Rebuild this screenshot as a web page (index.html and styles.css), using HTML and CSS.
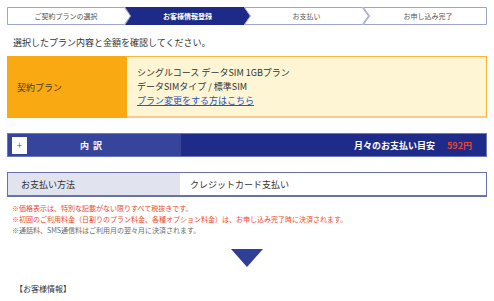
FILE: index.html
```html
<!DOCTYPE html>
<html lang="ja">
<head>
<meta charset="utf-8">
<link rel="stylesheet" href="styles.css">
</head>
<body>
<div class="page">
  <div class="steps">
    <div class="step s1">
      <svg class="shape" width="124" height="18" viewBox="0 0 124 18"><polygon points="0.5,0.5 117.5,0.5 123.5,9 117.5,17.5 0.5,17.5" fill="#fff" stroke="#9ea3cf" stroke-width="1"/></svg>
      <span class="label">ご契約プランの選択</span>
    </div>
    <div class="step s2 active">
      <svg class="shape" width="125" height="18" viewBox="0 0 125 18"><polygon points="0,0 119,0 125,9 119,18 0,18 6,9" fill="#1d2a87"/></svg>
      <span class="label">お客様情報登録</span>
    </div>
    <div class="step s3">
      <svg class="shape" width="125" height="18" viewBox="0 0 125 18"><polygon points="0.5,0.5 118.5,0.5 124.5,9 118.5,17.5 0.5,17.5 6.5,9" fill="#fff" stroke="#9ea3cf" stroke-width="1"/></svg>
      <span class="label">お支払い</span>
    </div>
    <div class="step s4">
      <svg class="shape" width="124" height="18" viewBox="0 0 124 18"><polygon points="0.5,0.5 123.5,0.5 123.5,17.5 0.5,17.5 6.5,9" fill="#fff" stroke="#9ea3cf" stroke-width="1"/></svg>
      <span class="label">お申し込み完了</span>
    </div>
  </div>

  <p class="lead">選択したプラン内容と金額を確認してください。</p>

  <div class="plan">
    <div class="plan-head">契約プラン</div>
    <div class="plan-body">
      <div>シングルコース データSIM 1GBプラン</div>
      <div>データSIMタイプ / 標準SIM</div>
      <div><a class="link" href="#">プラン変更をする方はこちら</a></div>
    </div>
  </div>

  <div class="breakdown">
    <div class="bd-left">
      <span class="plus">+</span>
      <span class="bd-title">内&nbsp;&nbsp;訳</span>
    </div>
    <div class="bd-right">
      <span class="bd-label">月々のお支払い目安</span>
      <span class="bd-price">592円</span>
    </div>
  </div>

  <div class="pay">
    <div class="pay-head">お支払い方法</div>
    <div class="pay-body">クレジットカード支払い</div>
  </div>

  <div class="notes">
    <p class="note red">※価格表示は、特別な記載がない限りすべて税抜きです。</p>
    <p class="note red">※初回のご利用料金（日割りのプラン料金、各種オプション料金）は、お申し込み完了時に決済されます。</p>
    <p class="note gray">※通話料、SMS通信料はご利用月の翌々月に決済されます。</p>
  </div>

  <div class="arrow"></div>

  <p class="section">【お客様情報】</p>
</div>
</body>
</html>
```
FILE: styles.css
```css
* { box-sizing: border-box; }
html, body { margin: 0; padding: 0; background: #fff; }
body {
  font-family: "Noto Sans CJK JP", "Noto Sans", sans-serif;
  color: #333;
}
.page { padding: 7px 7px 0 7px; width: 494px; }

.steps { display: flex; height: 18px; width: 480px; }
.step { position: relative; height: 18px; display: flex; align-items: center; justify-content: center; }
.step .shape { position: absolute; left: 0; top: 0; overflow: visible; }
.step .label { position: relative; font-size: 7px; line-height: 18px; color: #555; }
.s1 { width: 118px; }
.s2 { width: 119px; }
.s3 { width: 119px; }
.s4 { flex: 1; }
.s2 .label, .s3 .label, .s4 .label { padding-left: 6px; }
.active .label { color: #fff; font-weight: bold; }

.lead { margin: 11px 0 6px 6px; font-size: 9px; line-height: 14px; color: #333; }

.plan { display: flex; height: 62px; }
.plan-head {
  width: 120px; background: #f9a911; font-size: 9px; color: #4a3a1a;
  display: flex; align-items: center; padding-left: 10px;
}
.plan-body {
  flex: 1; background: #fdf5d4; border-top: 1px solid #fbb43c; border-right: 1px solid #fbb43c;
  border-bottom: 2px solid #fcc98a; padding: 9px 10px 0 10px;
  font-size: 9px; line-height: 14px; color: #333;
}
.link { color: #2a55c4; text-decoration: underline; }

.breakdown {
  display: flex; height: 24px; margin-top: 15px;
  border: 1px solid #6d78b8; background: #1f2b88;
}
.bd-left {
  width: 173px; background: #34459b; display: flex; align-items: center; padding-left: 4px;
}
.plus {
  width: 15px; height: 17px; background: #fff; color: #444; font-size: 10px; font-weight: 300;
  display: flex; align-items: center; justify-content: center; line-height: 1;
}
.bd-title { margin-left: 53px; color: #fff; font-size: 9px; font-weight: bold; }
.bd-right {
  flex: 1; display: flex; align-items: center; justify-content: flex-end; padding-right: 14px;
  font-size: 9px; font-weight: bold;
}
.bd-label { color: #fff; }
.bd-price { color: #e8432b; margin-left: 12px; }

.pay {
  display: flex; height: 25px; margin-top: 15px;
  border: 1px solid #6870b0; border-bottom-width: 2px;
}
.pay-head {
  width: 172px; background: #e1e3ee; font-size: 9px; color: #333;
  display: flex; align-items: center; padding-left: 13px;
}
.pay-body { flex: 1; display: flex; align-items: center; padding-left: 10px; font-size: 9px; color: #333; }

.notes { margin-top: 6px; padding-left: 5px; }
.note { margin: 0; font-size: 7px; line-height: 11px; white-space: nowrap; }
.red { color: #ee4a2c; }
.gray { color: #6a6a6a; }

.arrow {
  width: 0; height: 0; margin: 13px auto 0 auto;
  border-left: 16.5px solid transparent; border-right: 16.5px solid transparent;
  border-top: 18px solid #2f3f95;
}

.section { margin: 16px 0 0 8px; font-size: 8px; line-height: 12px; color: #333; }
```
